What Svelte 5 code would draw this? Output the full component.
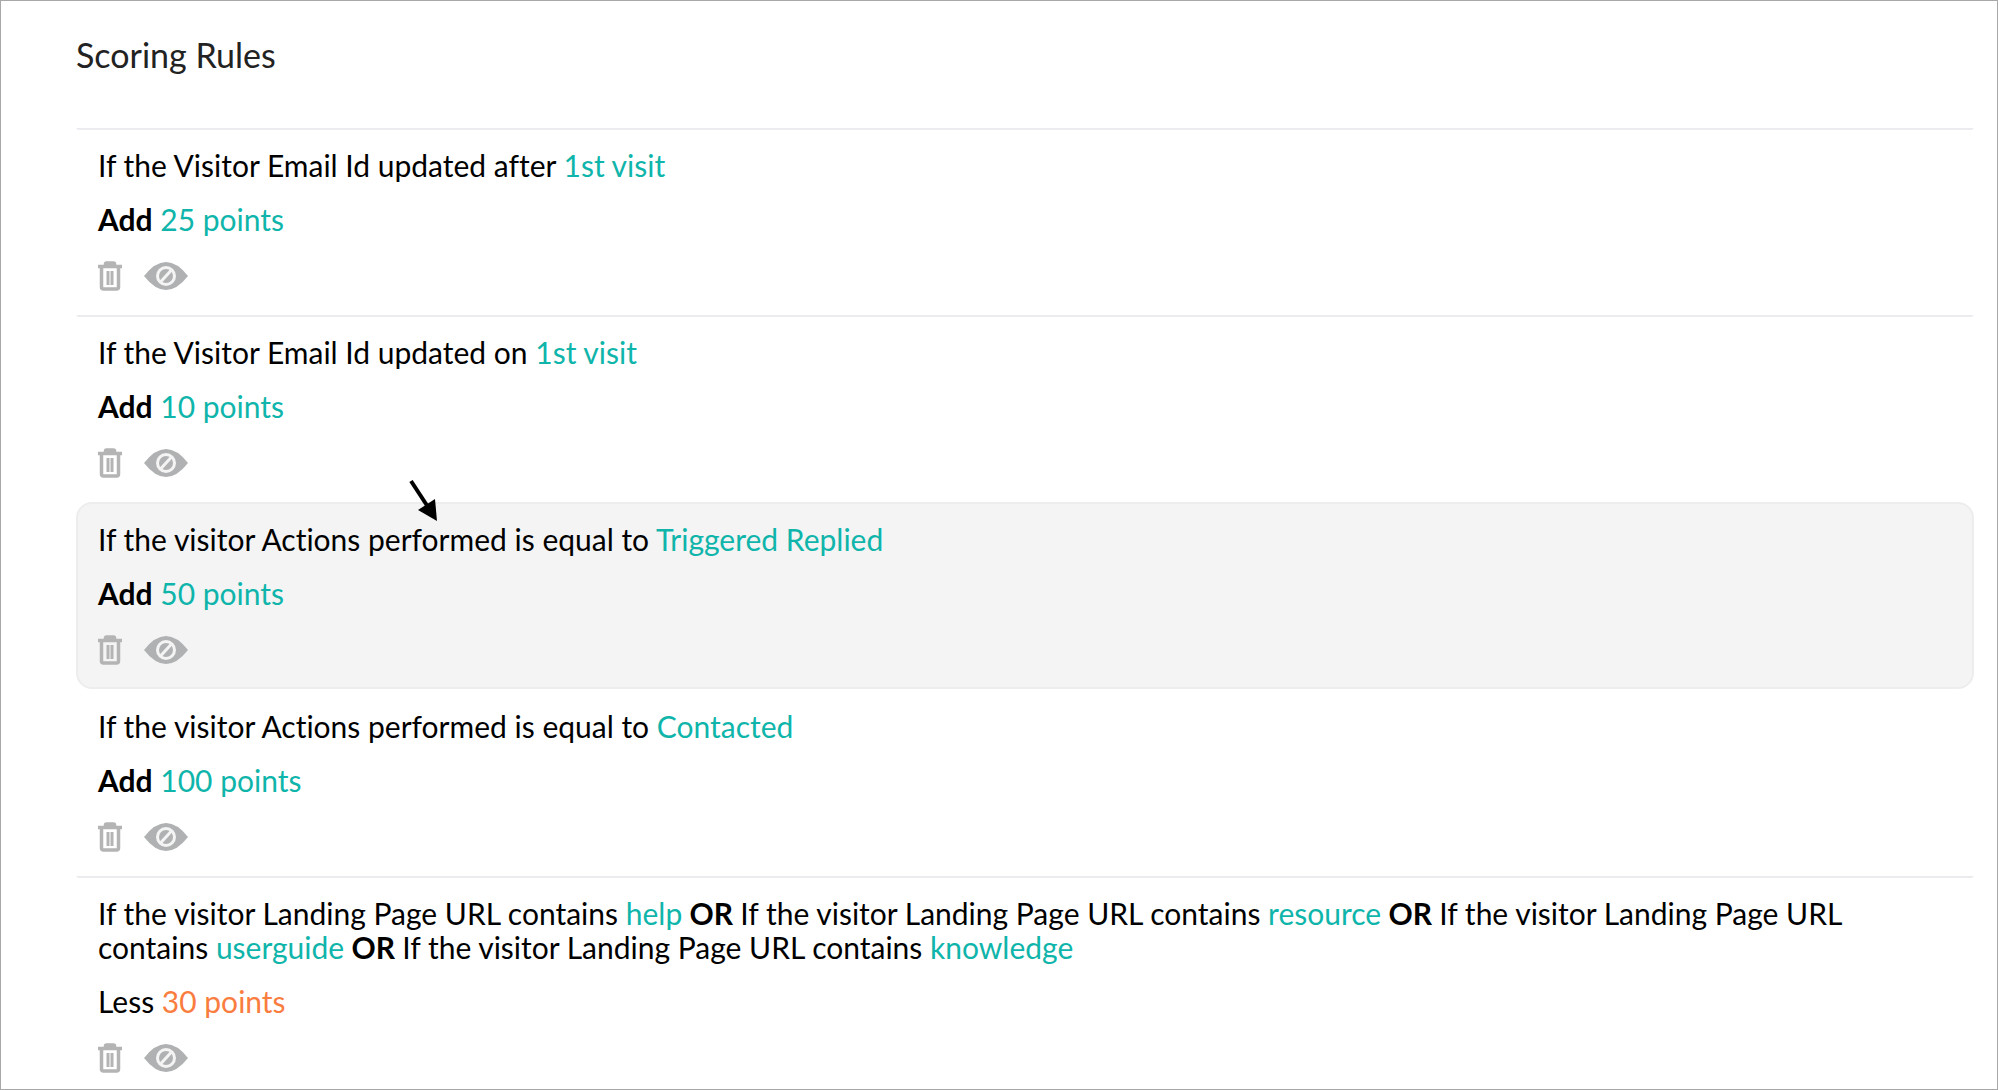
<script>
	let rules = $state([
		{
			id: 1,
			conditions: [{ text: 'If the Visitor Email Id updated after', value: '1st visit' }],
			action: 'Add',
			points: 25
		},
		{
			id: 2,
			conditions: [{ text: 'If the Visitor Email Id updated on', value: '1st visit' }],
			action: 'Add',
			points: 10
		},
		{
			id: 3,
			conditions: [
				{ text: 'If the visitor Actions performed is equal to', value: 'Triggered Replied' }
			],
			action: 'Add',
			points: 50
		},
		{
			id: 4,
			conditions: [{ text: 'If the visitor Actions performed is equal to', value: 'Contacted' }],
			action: 'Add',
			points: 100
		},
		{
			id: 5,
			conditions: [
				{ text: 'If the visitor Landing Page URL contains', value: 'help' },
				{ text: 'If the visitor Landing Page URL contains', value: 'resource' },
				{ text: 'If the visitor Landing Page URL contains', value: 'userguide' },
				{ text: 'If the visitor Landing Page URL contains', value: 'knowledge' }
			],
			action: 'Less',
			points: 30
		}
	]);
	let activeId = $state(3);

	function remove(id) {
		rules = rules.filter((rule) => rule.id !== id);
	}
</script>

<main class="page">
	<h1>Scoring Rules</h1>

	<ul class="rules">
		{#each rules as rule (rule.id)}
			<li class="rule" class:active={rule.id === activeId}>
				<p class="conditions">
					{#each rule.conditions as condition, i}
						{#if i > 0}<strong>{' OR '}</strong>{/if}{condition.text}
						<span class="value">{condition.value}</span>
					{/each}
				</p>

				<p class="score" class:less={rule.action === 'Less'}>
					<span class="action">{rule.action}</span>
					<span class="value">{rule.points} points</span>
				</p>

				<div class="tools">
					<button type="button" aria-label="Delete rule" onclick={() => remove(rule.id)}>
						<svg class="trash" viewBox="0 0 24 30" aria-hidden="true">
							<path d="M0 5.5h24M7.500 5V3Q7.500 2 8.500 2h7q1 0 1 1V5" />
							<path d="M3.500 6v20q0 2 2 2h13q2 0 2-2V6" />
							<path class="ribs" d="M10 10v14M14 10v14" />
						</svg>
					</button>
					<button type="button" aria-label="Disable rule" onclick={() => (activeId = rule.id)}>
						<svg class="eye" viewBox="0 0 44 28" aria-hidden="true">
							<path class="lid" d="M0 14Q11 0 22 0t22 14Q33 28 22 28T0 14z" />
							<circle cx="22" cy="14" r="8.500" />
							<path class="slash" d="M16.500 20l11-12" />
						</svg>
					</button>
				</div>

				{#if rule.id === activeId}
					<svg class="pointer" viewBox="0 0 32 44" aria-hidden="true">
						<path class="shaft" d="M3 3l17 26" />
						<path d="M29 43L10 32l17-11z" />
					</svg>
				{/if}
			</li>
		{/each}
	</ul>
</main>

<style>
	:global(body) {
		background: #fff;
	}

	.page {
		box-sizing: border-box;
		min-height: 100vh;
		padding: 34px 23px 15px 75px;
		border: 1px solid #a8a8a8;
		color: #000;
		font-family: Lato, sans-serif;
		font-size: 30px;
		font-variant-ligatures: none;
		line-height: 34px;
	}

	h1 {
		margin: 0 0 53px;
		color: #222;
		font-size: 34px;
		font-weight: 400;
		line-height: 40px;
	}

	.rules {
		margin: 0;
		padding: 0;
		list-style: none;
	}

	.rule {
		position: relative;
		padding: 18px 24px 22px 20px;
		border: 2px solid transparent;
		border-top-color: #ebebf0;
	}

	.rule.active {
		border-color: #ededed;
		border-radius: 16px;
		background: #f4f4f4;
	}

	.rule.active + .rule {
		border-top-color: transparent;
	}

	.rule:last-child {
		padding-bottom: 0;
		border-bottom: 0;
	}

	p {
		margin: 0 0 20px;
	}

	.value {
		color: #0fb5aa;
	}

	.action,
	strong {
		font-weight: 700;
	}

	.less .action {
		font-weight: 400;
	}

	.less .value {
		color: #fa7d40;
	}

	.tools {
		display: flex;
		align-items: center;
		gap: 22px;
		margin-top: 25px;
	}

	button {
		display: block;
		padding: 0;
		border: 0;
		background: transparent;
		cursor: pointer;
	}

	svg {
		display: block;
	}

	.trash {
		width: 24px;
		height: 30px;
		fill: none;
		stroke: #b4b4b4;
		stroke-width: 3.5;
	}

	.ribs {
		stroke-width: 3;
	}

	.eye {
		width: 44px;
		height: 28px;
	}

	.lid {
		fill: #b0b1b2;
	}

	.eye circle,
	.slash {
		fill: none;
		stroke: #f4f4f4;
		stroke-width: 3;
	}

	.pointer {
		position: absolute;
		top: -26px;
		left: 330px;
		width: 32px;
		height: 44px;
		pointer-events: none;
	}

	.shaft {
		stroke: #000;
		stroke-width: 4;
	}
</style>
